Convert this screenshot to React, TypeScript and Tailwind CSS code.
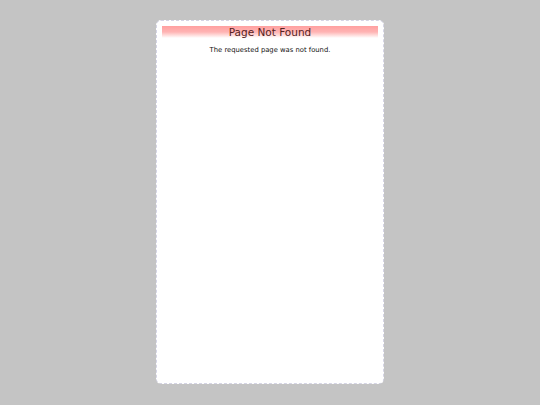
export default function App() {
  return (
    <div className="flex h-[405px] w-[540px] items-start justify-center bg-[#c4c4c4] pt-[20px] font-['DejaVu_Sans',sans-serif]">
      <div className="flex h-[364px] w-[228px] flex-col rounded-[5px] border border-dashed border-[#d4d4e4] bg-white px-[5px] pt-[5px]">
        <div className="h-[12px] bg-gradient-to-b from-[#ffa0a0] via-[#ffb4b4] to-white text-center text-[10.5px] leading-[13px] text-[#552222]">
          Page Not Found
        </div>
        <p className="mt-[8px] text-center text-[6.8px] leading-[9px] text-[#111]">The requested page was not found.</p>
      </div>
    </div>
  );
}
